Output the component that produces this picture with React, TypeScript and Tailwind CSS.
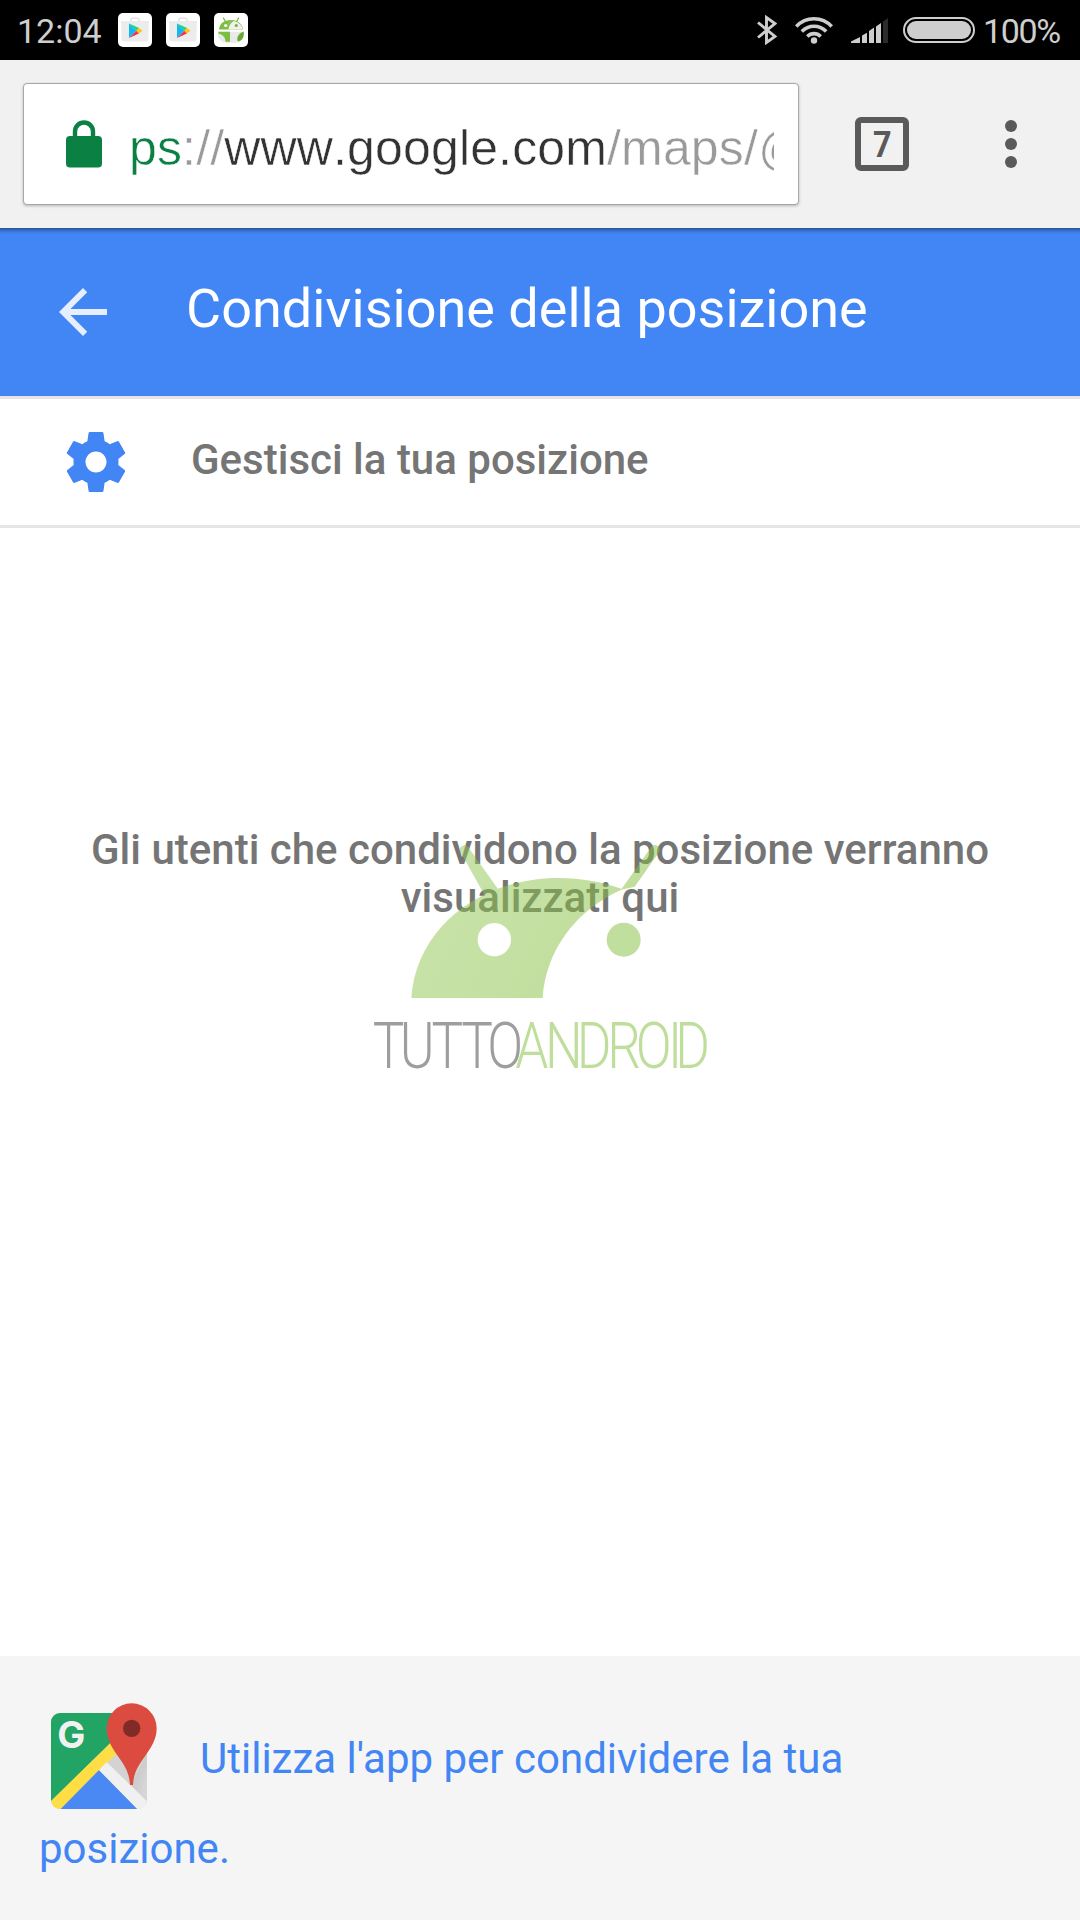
import type { ReactNode } from 'react';

function NotificationIcon({ children }: { children: ReactNode }) {
  return (
    <svg viewBox="0 0 34 34" className="h-[34px] w-[34px] shrink-0">
      <rect width="34" height="34" rx="5" fill="#fff" />
      {children}
    </svg>
  );
}

function PlayIcon() {
  return (
    <NotificationIcon>
      <path d="M13 8V6.800q0-1.600 1.600-1.600h4.800q1.600 0 1.600 1.600V8" fill="none" stroke="#dedede" strokeWidth="1.300" />
      <path d="M3 8h28l-.6 18.500q-.2 2-2.200 2H5.800q-2 0-2.200-2z" fill="#ececec" />
      <path d="M11 10.500v14.600l7.400-7.300z" fill="#10b9f2" />
      <path d="M11 10.500l7.400 7.300 2.600-2.800z" fill="#18d67a" />
      <path d="M11 25.100l7.400-7.300 2.600 2.600z" fill="#f0344f" />
      <path d="M21 15l3.500 2.700-3.500 2.700-2.600-2.600z" fill="#ffc40c" />
    </NotificationIcon>
  );
}

function DroidIcon() {
  return (
    <NotificationIcon>
      <path d="M11.500 9L9.500 5M22.500 9l2-4" stroke="#7cb342" strokeWidth="1.200" strokeLinecap="round" />
      <path d="M5 16.500C5.500 10 11 6.500 18 7c-3.500 2.500-5 5.500-5.200 9.500z" fill="#7cbd42" />
      <path d="M18 7c6 .5 10.500 4 11 9.500H12.800C13 12.500 14.500 9.500 18 7z" fill="#7cbd42" />
      <path d="M14.500 16.500c.2-3.600 2-6.500 5-8.500 5 1 8.500 4 9.300 8.500z" fill="#f0f0f0" />
      <circle cx="11.600" cy="12.500" r="1.500" fill="#fff" />
      <circle cx="22.300" cy="12.500" r="1.600" fill="#7cb342" />
      <path d="M4 18.700h24v7q-1.500 4-7 4H12q-6-1-8-6z" fill="#e9e9e9" />
      <path d="M4.500 18.700H16v10h-4.500c0-4-2.500-7.500-7-8z" fill="#7cbd42" />
      <path d="M29.500 18.500c1.200 4-.8 9.500-5.500 10-1.800-2.500-.2-8 5.500-10z" fill="#6aa833" />
    </NotificationIcon>
  );
}

function StatusBar() {
  return (
    <div className="flex h-[60px] items-center bg-black pl-[17px] pr-[18px] text-[34px] leading-none text-[#cecece]">
      <span className="w-[101px] pt-[2px]">12:04</span>
      <div className="flex gap-[14px]">
        <PlayIcon />
        <PlayIcon />
        <DroidIcon />
      </div>
      <div className="ml-auto flex items-center">
        <svg viewBox="0 0 20 30" className="mr-[18px] h-[30px] w-5" fill="none" stroke="#cecece" strokeWidth="2.900">
          <path d="M1 7.500l17 14-8.500 6V2.500l8.500 6-17 14" />
        </svg>
        <svg viewBox="0 0 38 28" className="mr-[18px] h-7 w-[38px]" fill="none" stroke="#cecece" strokeWidth="3.600">
          <path d="M1.300 10.500C11 .2 27 .2 36.700 10.500" />
          <path d="M6.800 15.500c6.800-7 17.600-7 24.400 0" />
          <path d="M12.300 20.500c3.800-3.900 9.600-3.900 13.400 0" />
          <circle cx="19" cy="24.500" r="3.200" fill="#cecece" stroke="none" />
        </svg>
        <svg viewBox="0 0 37 25" className="mr-[15px] h-[25px] w-[37px]" fill="#cecece">
          <path d="M0 25v-1.500L9 19v6zM11 25v-7.500l5-2.700V25zM18 25V13l5-3.500V25zM25 25V8.500L30 5v20z" />
          <path d="M32 25V3.500L37 0v25z" fill="#2b2b2b" />
        </svg>
        <div className="mr-2 h-[26px] w-[72px] rounded-full border-2 border-[#cecece] p-[2px]">
          <div className="h-full rounded-full bg-[#cecece]" />
        </div>
        <span className="w-[79px] pt-[2px] tracking-[-1.4px]">100%</span>
      </div>
    </div>
  );
}

function BrowserBar() {
  return (
    <div className="flex h-[168px] items-center bg-[#f1f1f1] pl-[23px]">
      <div className="flex h-[122px] w-[776px] items-center rounded-[4px] border border-[#a8a8a8] bg-white pl-[42px] shadow-[0_1px_3px_rgba(0,0,0,0.25)]">
        <svg viewBox="0 0 36 48" className="mr-[27px] h-12 w-9 shrink-0">
          <path d="M9 18v-6.500a9 9 0 0 1 18 0V18" fill="none" stroke="#0b8043" strokeWidth="4.400" />
          <rect y="16" width="36" height="31.500" rx="4" fill="#0b8043" />
        </svg>
        <div className="w-[645px] overflow-hidden pt-2 font-['Liberation_Sans',sans-serif] text-[50px] leading-[64px] tracking-[0.15px] whitespace-nowrap text-[#9a9a9a] [-webkit-text-stroke:0.5px_#fff] [font-kerning:none]">
          <span className="text-[#0b8043]">ps</span>://
          <span className="text-[#333]">www.google.com</span>/maps/@
        </div>
      </div>
      <div className="ml-14 flex h-[54px] w-[54px] items-center justify-center rounded-[6px] border-[6px] border-[#5a5a5a] text-[36px] leading-none font-bold text-[#5a5a5a]">
        <span className="scale-x-90 pt-[2px]">7</span>
      </div>
      <div className="ml-24 flex flex-col gap-[6px]">
        <span className="h-3 w-3 rounded-full bg-[#5a5a5a]" />
        <span className="h-3 w-3 rounded-full bg-[#5a5a5a]" />
        <span className="h-3 w-3 rounded-full bg-[#5a5a5a]" />
      </div>
    </div>
  );
}

function Watermark() {
  return (
    <svg viewBox="0 0 1200 870" className="absolute top-[272px] left-[340px] h-[290px] w-[400px]">
      <defs>
        <linearGradient id="leaf" x1="214" y1="234" x2="900" y2="594" gradientUnits="userSpaceOnUse">
          <stop offset="0" stopColor="#95c956" />
          <stop offset="1" stopColor="#7fbc38" />
        </linearGradient>
      </defs>
      <g opacity="0.5" fill="url(#leaf)">
        <path
          fillRule="evenodd"
          d="M214 594C228 385 420 234 655 234C725 234 790 246 848 268C705 330 617 455 608 594ZM463 369a50 50 0 1 0 .1 0Z"
        />
        <path d="M360 154a14 14 0 0 1 25-12L474 267L434 286Z" />
        <path d="M934 141a14 14 0 0 1 24 14L884 260L843 269Z" />
        <circle cx="851" cy="419" r="51" />
      </g>
      <g fontFamily="Roboto, sans-serif" fontSize="194" fontWeight="300" transform="scale(.82 1)">
        <text y="803" x="120 219 335 444 539" fill="#404040" opacity="0.5">TUTTO</text>
        <text y="803" x="641 750 866 978 1082 1200 1227" fill="#8bc34a" opacity="0.55">ANDROID</text>
      </g>
    </svg>
  );
}

function MapsIcon() {
  return (
    <svg viewBox="150 186 324 324" className="mr-[42px] inline-block h-[108px] w-[108px] align-[-37px]">
      <defs>
        <clipPath id="tile">
          <rect x="153" y="219" width="288" height="288" rx="27" />
        </clipPath>
        <linearGradient id="fold" x1="360" y1="400" x2="440" y2="430" gradientUnits="userSpaceOnUse">
          <stop offset="0" stopColor="#bdbdbd" />
          <stop offset="1" stopColor="#d6d6d6" />
        </linearGradient>
      </defs>
      <g clipPath="url(#tile)">
        <path d="M153 219h288v288H153z" fill="#d3d3d3" />
        <path d="M395 435L441 340V480z" fill="url(#fold)" />
        <path d="M153 219h270L153 484z" fill="#21a464" />
        <path d="M153 483L335 305l34 17L182 507h-29z" fill="#ffdd45" />
        <path d="M297 390l115 117H182z" fill="#4a89f3" />
        <path d="M320 366l121 118v23h-29L297 390z" fill="#f0f0f1" />
      </g>
      <text x="172" y="325" fontFamily="Inter, sans-serif" fontSize="112" fontWeight="650" fill="#f1f1f1">G</text>
      <path d="M320 265a75 75 0 0 1 150 0c0 30-14 54-31 78-21 30-38 51-40 92h-9c-2-41-19-62-40-92-17-24-30-48-30-78z" fill="#db4b3f" />
      <circle cx="395" cy="265" r="26" fill="#802b27" />
    </svg>
  );
}

export default function App() {
  return (
    <div className="flex h-[1920px] w-[1080px] flex-col overflow-hidden bg-white font-[Roboto,sans-serif]">
      <StatusBar />
      <BrowserBar />

      <header className="flex h-[168px] items-center bg-[#4285f4] pl-[47px] text-white shadow-[inset_0_6px_4px_-4px_rgba(0,0,0,0.45)]">
        <svg viewBox="0 0 24 24" className="h-[72px] w-[72px]" fill="#fff" fillOpacity="0.87">
          <path d="M20 11H7.830l5.590-5.590L12 4l-8 8 8 8 1.410-1.410L7.830 13H20v-2z" />
        </svg>
        <h1 className="ml-[67px] pb-[6px] text-[54px] leading-none">Condivisione della posizione</h1>
      </header>

      <div className="flex h-[132px] items-center border-y-[3px] border-[#e5e5e5] pl-[60px]">
        <svg viewBox="0 0 24 24" className="h-[72px] w-[72px]" fill="#4285f4">
          <path d="M19.430 12.980c.04-.32.070-.640.070-.980s-.030-.660-.070-.980l2.110-1.650c.190-.150.240-.420.120-.640l-2-3.460c-.120-.220-.390-.300-.610-.220l-2.490 1c-.520-.400-1.080-.730-1.690-.980l-.380-2.650C14.460 2.180 14.250 2 14 2h-4c-.250 0-.460.180-.490.420l-.380 2.650c-.610.250-1.170.590-1.690.980l-2.490-1c-.230-.090-.490 0-.610.220l-2 3.460c-.130.220-.070.490.120.640l2.110 1.650c-.040.320-.070.650-.070.980s.030.660.070.980l-2.110 1.650c-.190.150-.240.420-.120.640l2 3.460c.120.220.390.300.610.220l2.490-1c.520.400 1.080.730 1.690.980l.380 2.650c.030.240.240.420.490.420h4c.250 0 .460-.180.490-.420l.380-2.650c.610-.250 1.170-.590 1.690-.980l2.490 1c.230.090.490 0 .610-.220l2-3.460c.120-.220.070-.490-.120-.640l-2.110-1.650zM12 15.500c-1.930 0-3.500-1.570-3.500-3.500s1.570-3.500 3.500-3.500 3.500 1.570 3.500 3.500-1.570 3.500-3.500 3.500z" />
        </svg>
        <span className="ml-[59px] pb-1 text-[42px] leading-none font-medium text-[#757575]">Gestisci la tua posizione</span>
      </div>

      <main className="relative flex-1 px-[60px] pt-[298px]">
        <p className="text-center text-[42px] leading-[48px] font-medium text-[#757575]">
          Gli utenti che condividono la posizione verranno visualizzati qui
        </p>
        <Watermark />
      </main>

      <footer className="h-[264px] bg-[#f5f5f5] pt-[46px] pr-[200px] pl-[39px] text-[42px] leading-[78px] text-[#4285f4]">
        <p>
          <span className="inline-block w-[11px]" />
          <MapsIcon />
          Utilizza l'app per condividere la tua posizione.
        </p>
      </footer>
    </div>
  );
}
